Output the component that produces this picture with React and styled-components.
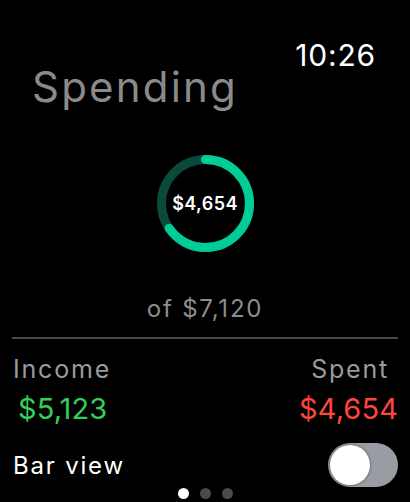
import React from "react"
import styled, { createGlobalStyle } from "styled-components"

const GlobalStyle = createGlobalStyle`
  html, body {
    margin: 0;
    padding: 0;
    background: #000;
  }
  body {
    font-family: Inter, "Liberation Sans", sans-serif;
    color: #fff;
  }
`

const Screen = styled.main`
  width: 410px;
  height: 502px;
  overflow: hidden;
  display: flex;
  flex-direction: column;
  box-sizing: border-box;
  padding: 0 12px;
`

const StatusBar = styled.header`
  height: 66px;
  display: flex;
  justify-content: flex-end;
  align-items: flex-start;
  padding: 40px 22px 0 0;
  box-sizing: border-box;
`

const Clock = styled.span`
  font-size: 30px;
  line-height: 30px;
  height: 26px;
  letter-spacing: 0.8px;
`

const Title = styled.h1`
  margin: 0 0 0 20px;
  font-size: 42px;
  line-height: 42px;
  font-weight: 400;
  letter-spacing: 2.2px;
  color: #8a8a8a;
`

const RingWrap = styled.div`
  position: relative;
  width: 97px;
  height: 97px;
  margin: 47px auto 0;
  display: flex;
  align-items: center;
  justify-content: center;
`

const RingSvg = styled.svg`
  position: absolute;
  inset: 0;
`

const RingValue = styled.span`
  position: relative;
  font-size: 18px;
  font-weight: 600;
  letter-spacing: 0.4px;
`

const Budget = styled.div`
  margin-top: 45px;
  text-align: center;
  font-size: 24px;
  line-height: 24px;
  letter-spacing: 1.8px;
  color: #8d8d8d;
`

const Divider = styled.hr`
  margin: 16px 0 0;
  border: none;
  height: 2px;
  background: #4a4a4a;
`

const Stats = styled.section`
  display: flex;
  justify-content: space-between;
  margin-top: 18px;
`

const Stat = styled.div`
  display: flex;
  flex-direction: column;
  gap: 12px;
  align-items: ${(p) => (p.$right ? "flex-end" : "flex-start")};
`

const Label = styled.span`
  font-size: 25px;
  line-height: 25px;
  color: #9a9a9e;
  padding: ${(p) => (p.$right ? "0 9px 0 0" : "0 0 0 1px")};
  letter-spacing: 1.8px;
`

const Amount = styled.span`
  font-size: 29px;
  line-height: 30px;
  color: ${(p) => p.$color};
  padding-left: ${(p) => (p.$right ? "0" : "6px")};
  letter-spacing: 0.1px;
`

const ToggleRow = styled.div`
  display: flex;
  justify-content: space-between;
  align-items: center;
  margin-top: 19px;
`

const ToggleLabel = styled.span`
  font-size: 24px;
  padding-left: 1px;
  letter-spacing: 1.8px;
`

const Switch = styled.div`
  width: 70px;
  height: 44px;
  border-radius: 22px;
  background: #9a9ca3;
  box-sizing: border-box;
  padding: 2px;
  display: flex;
  align-items: center;
`

const Knob = styled.div`
  width: 40px;
  height: 40px;
  border-radius: 50%;
  background: #fff;
  box-shadow: 0 0 3px rgba(0, 0, 0, 0.5);
`

const Dots = styled.nav`
  display: flex;
  justify-content: center;
  gap: 11px;
  margin-top: 1px;
`

const Dot = styled.span`
  width: 11px;
  height: 11px;
  border-radius: 50%;
  background: ${(p) => (p.$active ? "#fff" : "#4a4a4a")};
`

const Ring = ({ value, total }) => {
  const r = 44
  const c = 2 * Math.PI * r
  const progress = (value / total) * c
  return (
    <RingSvg width="97" height="97" viewBox="0 0 97 97">
      <circle cx="48.5" cy="48.5" r={r} fill="none" stroke="#0a4a3a" strokeWidth="9" />
      <circle
        cx="48.5"
        cy="48.5"
        r={r}
        fill="none"
        stroke="#00cc98"
        strokeWidth="9"
        strokeLinecap="round"
        strokeDasharray={`${progress} ${c}`}
        transform="rotate(-90 48.5 48.5)"
      />
    </RingSvg>
  )
}

const App = () => {
  return (
    <Screen>
      <GlobalStyle />
      <StatusBar>
        <Clock>10:26</Clock>
      </StatusBar>
      <Title>Spending</Title>
      <RingWrap>
        <Ring value={4654} total={7120} />
        <RingValue>$4,654</RingValue>
      </RingWrap>
      <Budget>of $7,120</Budget>
      <Divider />
      <Stats>
        <Stat>
          <Label>Income</Label>
          <Amount $color="#30d158">$5,123</Amount>
        </Stat>
        <Stat $right>
          <Label $right>Spent</Label>
          <Amount $right $color="#ff453a">$4,654</Amount>
        </Stat>
      </Stats>
      <ToggleRow>
        <ToggleLabel>Bar view</ToggleLabel>
        <Switch>
          <Knob />
        </Switch>
      </ToggleRow>
      <Dots>
        <Dot $active />
        <Dot />
        <Dot />
      </Dots>
    </Screen>
  )
}

export default App
